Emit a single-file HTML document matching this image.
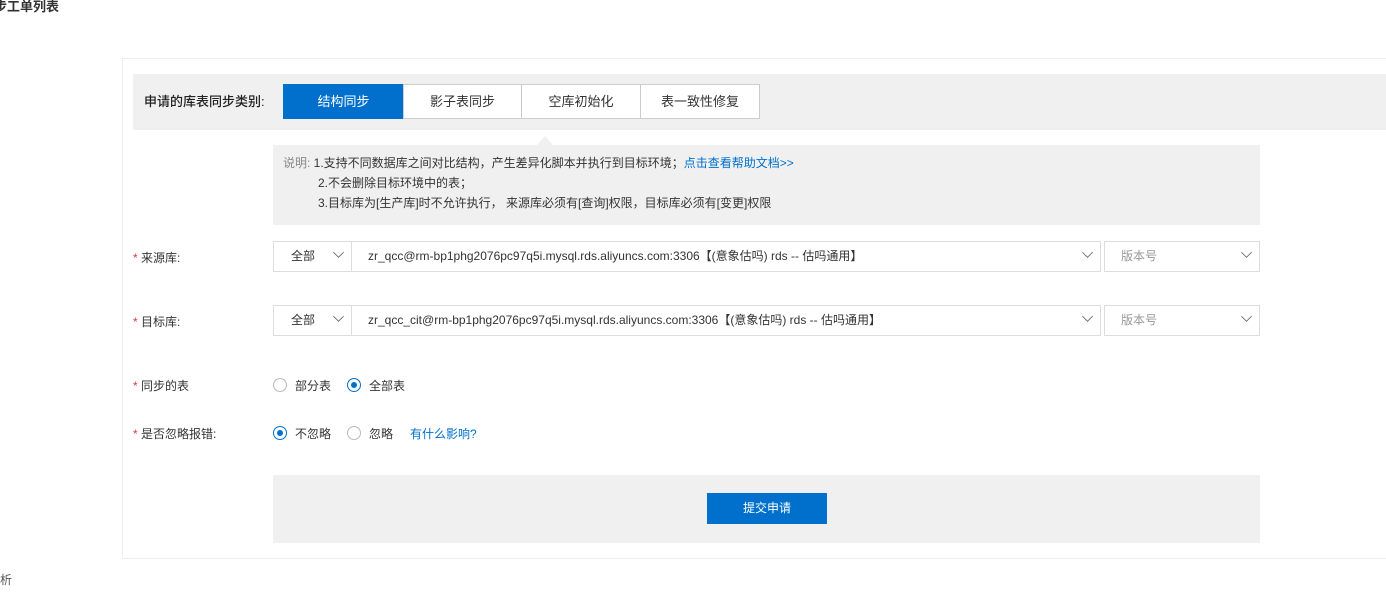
<!DOCTYPE html>
<html><head><meta charset="utf-8"><style>
*{margin:0;padding:0;box-sizing:border-box}
body{width:1386px;height:602px;background:#fff;font-family:"Liberation Sans","Noto Sans CJK SC",sans-serif;font-size:12px;color:#333;position:relative;overflow:hidden}
.a{position:absolute}
.tab{position:absolute;top:84px;height:35px;border:1px solid #ccc;background:#fff;text-align:center;line-height:33px;font-size:13px;color:#333}
.sel{position:absolute;height:31px;border:1px solid #ddd;background:#fff;line-height:29px;font-size:12px}
.chev{position:absolute;right:8px;width:9px;height:9px;border-right:1.3px solid #666;border-bottom:1.3px solid #666;transform:rotate(45deg) scale(.85);top:6px}
.lbl{position:absolute;left:133px;font-size:12px;color:#333}
.lbl b{color:#e4393c;font-weight:normal}
.r{position:absolute;width:14px;height:14px;border:1px solid #bbb;border-radius:50%;background:#fff}
.r.on{border-color:#0070cc}
.r.on:after{content:"";position:absolute;left:3px;top:3px;width:6px;height:6px;border-radius:50%;background:#0070cc}
</style></head><body>
<div class="a" style="left:-6px;top:-4px;font-weight:bold;font-size:13px;color:#333">步工单列表</div>
<div class="a" style="left:122px;top:58px;width:1280px;height:501px;border:1px solid #eee"></div>
<div class="a" style="left:133px;top:74px;width:1260px;height:56px;background:#f0f0f0"></div>
<div class="a" style="left:144px;top:91px;font-size:13px;color:#222;font-weight:500">申请的库表同步类别:</div>
<div class="tab" style="left:283px;width:121px;background:#0070cc;border-color:#0070cc;color:#fff">结构同步</div>
<div class="tab" style="left:403px;width:119px">影子表同步</div>
<div class="tab" style="left:521px;width:120px">空库初始化</div>
<div class="tab" style="left:640px;width:120px">表一致性修复</div>
<div class="a" style="left:537px;top:136px;width:0;height:0;border-left:8px solid transparent;border-right:8px solid transparent;border-bottom:9px solid #f0f0f0"></div>
<div class="a" style="left:273px;top:145px;width:987px;height:80px;background:#f0f0f0;line-height:20px;padding-top:8px;font-size:12px;color:#333">
<div style="padding-left:10px"><span style="color:#888">说明:</span> 1.支持不同数据库之间对比结构，产生差异化脚本并执行到目标环境；<span style="color:#0070cc">点击查看帮助文档&gt;&gt;</span></div>
<div style="padding-left:45px">2.不会删除目标环境中的表；</div>
<div style="padding-left:45px">3.目标库为[生产库]时不允许执行， 来源库必须有[查询]权限，目标库必须有[变更]权限</div>
</div>
<div class="lbl" style="top:249px"><b>*</b> 来源库:</div>
<div class="sel" style="left:273px;top:241px;width:79px;padding-left:17px">全部<i class="chev"></i></div>
<div class="sel" style="left:351px;top:241px;width:750px;padding-left:16px">zr_qcc@rm-bp1phg2076pc97q5i.mysql.rds.aliyuncs.com:3306【(意象估吗) rds -- 估吗通用】<i class="chev"></i></div>
<div class="sel" style="left:1104px;top:241px;width:156px;padding-left:16px;color:#999">版本号<i class="chev"></i></div>
<div class="lbl" style="top:313px"><b>*</b> 目标库:</div>
<div class="sel" style="left:273px;top:305px;width:79px;padding-left:17px">全部<i class="chev"></i></div>
<div class="sel" style="left:351px;top:305px;width:750px;padding-left:16px">zr_qcc_cit@rm-bp1phg2076pc97q5i.mysql.rds.aliyuncs.com:3306【(意象估吗) rds -- 估吗通用】<i class="chev"></i></div>
<div class="sel" style="left:1104px;top:305px;width:156px;padding-left:16px;color:#999">版本号<i class="chev"></i></div>
<div class="lbl" style="top:377px"><b>*</b> 同步的表</div>
<div class="r" style="left:273px;top:378px"></div><div class="a" style="left:295px;top:377px">部分表</div>
<div class="r on" style="left:347px;top:378px"></div><div class="a" style="left:369px;top:377px">全部表</div>
<div class="lbl" style="top:425px"><b>*</b> 是否忽略报错:</div>
<div class="r on" style="left:273px;top:426px"></div><div class="a" style="left:295px;top:425px">不忽略</div>
<div class="r" style="left:347px;top:426px"></div><div class="a" style="left:369px;top:425px">忽略</div>
<div class="a" style="left:410px;top:425px;color:#0070cc">有什么影响?</div>
<div class="a" style="left:273px;top:475px;width:987px;height:68px;background:#f0f0f0"></div>
<div class="a" style="left:707px;top:493px;width:120px;height:31px;background:#0070cc;color:#fff;text-align:center;line-height:31px">提交申请</div>
<div class="a" style="left:0;top:571px;color:#555">析</div>
</body></html>
